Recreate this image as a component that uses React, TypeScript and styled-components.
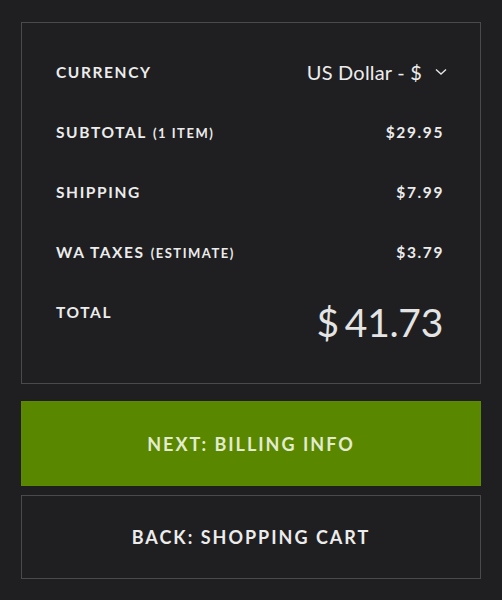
import React from "react";
import styled, { createGlobalStyle } from "styled-components";

const Global = createGlobalStyle`
  html, body { margin: 0; padding: 0; background: #1f1f21; }
  body { font-family: "Lato", "Noto Sans", sans-serif; color: #ececec; }
  * { box-sizing: border-box; }
`;

const Page = styled.div`
  width: 502px;
  height: 600px;
  padding: 22px 21px 0 21px;
  display: flex;
  flex-direction: column;
  gap: 17px;
  background: #1f1f21;
`;

const Card = styled.div`
  border: 1px solid #4a4a4d;
  padding: 19px 37px 31px 34px;
  display: flex;
  flex-direction: column;
`;

const Row = styled.div<{ $h?: number; $align?: string }>`
  display: flex;
  justify-content: space-between;
  align-items: ${(p) => p.$align || "center"};
  height: ${(p) => p.$h || 60}px;
`;

const Label = styled.div<{ $offset?: number }>`
  font-size: 15.5px;
  font-weight: 700;
  letter-spacing: 1.6px;
  text-transform: uppercase;
  color: #ececec;
  margin-top: ${(p) => p.$offset || 0}px;
`;

const Small = styled.span`
  font-size: 13px;
  letter-spacing: 1.5px;
  font-weight: 700;
  margin-left: 6px;
`;

const Value = styled.div`
  font-size: 15.5px;
  font-weight: 700;
  letter-spacing: 1.6px;
  color: #ececec;
  margin-right: -1px;
`;

const Select = styled.div`
  display: flex;
  align-items: center;
  gap: 13px;
  font-size: 20px;
  font-weight: 400;
  letter-spacing: 0.2px;
  color: #ececec;
  margin-right: -4px;
`;

const Total = styled.div`
  font-size: 39px;
  font-weight: 400;
  color: #e4e4e4;
  letter-spacing: -0.3px;
  margin-top: 21px;
  line-height: 1;
  display: flex;
  align-items: baseline;
  gap: 6px;
`;

const Button = styled.button<{ $primary?: boolean }>`
  height: ${(p) => (p.$primary ? 85 : 84)}px;
  width: 100%;
  border: 1px solid ${(p) => (p.$primary ? "#5c8a00" : "#4a4a4d")};
  background: ${(p) => (p.$primary ? "#5a8700" : "transparent")};
  color: ${(p) => (p.$primary ? "#e3eccf" : "#ececec")};
  font-family: "Lato", "Noto Sans", sans-serif;
  font-size: 18px;
  font-weight: 700;
  letter-spacing: 2px;
  text-transform: uppercase;
  padding: 0;
  cursor: pointer;
`;

const Buttons = styled.div`
  display: flex;
  flex-direction: column;
  gap: 9px;
`;

const Chevron = () => (
  <svg width="12" height="8" viewBox="0 0 12 8" fill="none">
    <path d="M1 1.5 L6 6 L11 1.5" stroke="#e4e4e4" strokeWidth="1.4" />
  </svg>
);

export default function App() {
  return (
    <>
      <Global />
      <Page>
        <Card>
          <Row>
            <Label>Currency</Label>
            <Select>
              <span>US Dollar - $</span>
              <Chevron />
            </Select>
          </Row>
          <Row>
            <Label>
              Subtotal<Small>(1 item)</Small>
            </Label>
            <Value>$29.95</Value>
          </Row>
          <Row>
            <Label>Shipping</Label>
            <Value>$7.99</Value>
          </Row>
          <Row>
            <Label>
              WA Taxes<Small>(estimate)</Small>
            </Label>
            <Value>$3.79</Value>
          </Row>
          <Row $h={70} $align="flex-start">
            <Label $offset={21}>Total</Label>
            <Total>
              <span>$</span>
              <span>41.73</span>
            </Total>
          </Row>
        </Card>
        <Buttons>
          <Button $primary>Next: Billing Info</Button>
          <Button>Back: Shopping Cart</Button>
        </Buttons>
      </Page>
    </>
  );
}
